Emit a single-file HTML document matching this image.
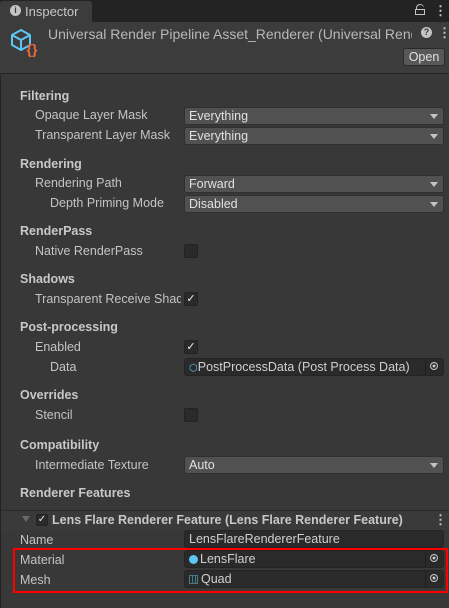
<!DOCTYPE html>
<html><head><style>
*{margin:0;padding:0;box-sizing:border-box}
body{width:449px;height:608px;background:#383838;font-family:"Liberation Sans",sans-serif;font-size:12.5px;color:#c4c4c4;position:relative;overflow:hidden}
.a{position:absolute;white-space:nowrap}
.h{font-weight:bold;color:#c8c8c8}
.dd{position:absolute;left:184px;width:260px;height:18px;background:#515151;border-radius:3px;border:1px solid #303030;color:#e0e0e0;padding:1px 4px;line-height:15px}
.dd:after{content:"";position:absolute;right:5px;top:6px;border-left:4px solid transparent;border-right:4px solid transparent;border-top:5px solid #c4c4c4}
.cb{position:absolute;left:184px;width:14px;height:14px;background:#2a2a2a;border:1px solid #222;border-radius:2px;color:#eee;font-size:11px;line-height:12px;text-align:center}
.of{position:absolute;left:184px;width:260px;height:18px;background:#2a2a2a;border:1px solid #242424;border-radius:3px;color:#d0d0d0;padding:1px 4px;line-height:15px}
.tg{position:absolute;right:0;top:0;width:18px;height:16px;border-left:1px solid #202020;}
.tg:after{content:"";position:absolute;left:4px;top:3px;width:6px;height:6px;border:1.5px solid #c4c4c4;border-radius:50%;box-shadow:inset 0 0 0 1.5px #2a2a2a,inset 0 0 0 3px #c4c4c4}
</style></head><body>
<div class="a" style="left:0;top:0;width:449px;height:22px;background:#232323"></div>
<div class="a" style="left:0;top:1px;width:92px;height:21px;background:#3c3c3c;border-radius:3px 3px 0 0"></div>
<div class="a" style="left:10px;top:5px;width:11px;height:11px;border-radius:50%;background:#c4c4c4;color:#3c3c3c;font-size:9px;font-weight:bold;text-align:center;line-height:11px">i</div>
<div class="a" style="left:25px;top:4px;font-size:13px;color:#c8c8c8">Inspector</div>
<div class="a" style="left:416px;top:4px;width:8px;height:5px;border:1.5px solid #c4c4c4;border-bottom:none;border-right:none;border-radius:4px 4px 0 0"></div>
<div class="a" style="left:415px;top:9px;width:10px;height:6px;border:1.5px solid #c4c4c4"></div>
<div class="a" style="left:434px;top:3px;font-size:13px;color:#c4c4c4;font-weight:bold">&#8942;</div>
<div class="a" style="left:0;top:22px;width:449px;height:52px;background:#3c3c3c;border-bottom:1px solid #232323"></div>
<svg class="a" style="left:8px;top:27px" width="34" height="30" viewBox="0 0 34 30"><path d="M4 8 L13 3 L22 8 L22 18 L13 23 L4 18 Z M4 8 L13 13 L22 8 M13 13 L13 23" fill="none" stroke="#5ec6f2" stroke-width="2" stroke-linejoin="round"/><text x="24" y="27" font-family="Liberation Sans" font-size="14" font-weight="bold" fill="#f26a3c" text-anchor="middle">{}</text></svg>
<div class="a" style="left:48px;top:26px;font-size:14px;color:#b8b8b8;width:364px;overflow:hidden">Universal Render Pipeline Asset_Renderer (Universal Renderer Data)</div>
<div class="a" style="left:421px;top:27px;width:11px;height:11px;border-radius:50%;background:#c4c4c4;color:#3c3c3c;font-size:9px;font-weight:bold;text-align:center;line-height:11px">?</div>
<div class="a" style="left:438px;top:25px;font-size:13px;font-weight:bold">&#8942;</div>
<div class="a" style="left:403px;top:48px;width:42px;height:18px;background:#585858;border:1px solid #2a2a2a;border-radius:3px;color:#e0e0e0;text-align:center;line-height:16px;font-size:12.5px">Open</div>
<div class="a" style="left:0;top:75px;width:1px;height:533px;background:#232323"></div>

<div class="a h" style="left:20px;top:89px">Filtering</div>
<div class="a" style="left:35px;top:108px">Opaque Layer Mask</div><div class="dd" style="top:107px">Everything</div>
<div class="a" style="left:35px;top:128px">Transparent Layer Mask</div><div class="dd" style="top:127px">Everything</div>
<div class="a h" style="left:20px;top:157px">Rendering</div>
<div class="a" style="left:35px;top:176px">Rendering Path</div><div class="dd" style="top:175px">Forward</div>
<div class="a" style="left:50px;top:196px">Depth Priming Mode</div><div class="dd" style="top:195px">Disabled</div>
<div class="a h" style="left:20px;top:224px">RenderPass</div>
<div class="a" style="left:35px;top:244px">Native RenderPass</div><div class="cb" style="top:244px"></div>
<div class="a h" style="left:20px;top:272px">Shadows</div>
<div class="a" style="left:35px;top:292px;width:146px;overflow:hidden">Transparent Receive Shadows</div><div class="cb" style="top:292px">&#10003;</div>
<div class="a h" style="left:20px;top:320px">Post-processing</div>
<div class="a" style="left:35px;top:340px">Enabled</div><div class="cb" style="top:340px">&#10003;</div>
<div class="a" style="left:50px;top:360px">Data</div><div class="of" style="top:358px"><span style="color:#5ec6f2;font-size:10px">&#x2B21;</span>PostProcessData (Post Process Data)<div class="tg"></div></div>
<div class="a h" style="left:20px;top:388px">Overrides</div>
<div class="a" style="left:35px;top:408px">Stencil</div><div class="cb" style="top:408px"></div>
<div class="a h" style="left:20px;top:438px">Compatibility</div>
<div class="a" style="left:35px;top:458px">Intermediate Texture</div><div class="dd" style="top:456px">Auto</div>
<div class="a h" style="left:20px;top:486px">Renderer Features</div>

<div class="a" style="left:1px;top:510px;width:448px;height:1px;background:#2a2a2a"></div>
<div class="a" style="left:1px;top:511px;width:448px;height:19px;background:#3a3a3a"></div>
<div class="a" style="left:22px;top:516px;border-left:4px solid transparent;border-right:4px solid transparent;border-top:6px solid #6a6a6a"></div>
<div class="cb" style="left:36px;top:514px;width:12px;height:12px;font-size:10px;line-height:10px">&#10003;</div>
<div class="a h" style="left:52px;top:513px">Lens Flare Renderer Feature (Lens Flare Renderer Feature)</div>
<div class="a" style="left:434px;top:512px;font-size:13px;font-weight:bold">&#8942;</div>
<div class="a" style="left:20px;top:533px">Name</div><div class="of" style="top:530px">LensFlareRendererFeature</div>
<div class="a" style="left:20px;top:553px">Material</div><div class="of" style="top:550px"><span style="display:inline-block;width:9px;height:9px;border-radius:50%;background:#5ec6f2;margin-right:2px;vertical-align:-1px"></span>LensFlare<div class="tg"></div></div>
<div class="a" style="left:20px;top:573px">Mesh</div><div class="of" style="top:570px"><span style="display:inline-block;width:9px;height:9px;border:1px solid #4a7a8a;background:repeating-linear-gradient(90deg,#2a2a2a 0 2px,#4a7a8a 2px 3px);margin-right:3px;vertical-align:-1px"></span>Quad<div class="tg"></div></div>
<div class="a" style="left:13px;top:548px;width:435px;height:45px;border:2px solid #ff0000"></div>
</body></html>
